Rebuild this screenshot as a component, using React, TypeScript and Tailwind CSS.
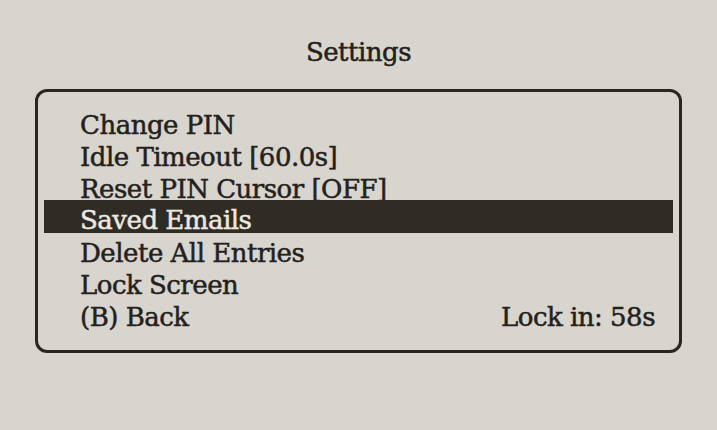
import React from 'react';

const items = [
  'Change PIN',
  'Idle Timeout [60.0s]',
  'Reset PIN Cursor [OFF]',
  'Saved Emails',
  'Delete All Entries',
  'Lock Screen',
];

const selected = 3;

// rows share one look; the selected one sits in a dark bar
const text = 'pl-[36px] leading-[32px] text-[26px] tracking-[-0.5px] whitespace-nowrap';

export default function App() {
  return (
    <div
      className="w-[717px] h-[430px] bg-[#d8d5ce] text-[#24211c] flex flex-col items-center [-webkit-text-stroke:0.5px_currentColor]"
      style={{ fontFamily: '"DejaVu Serif", serif' }}
    >
      <div className="mt-[36px] h-[32px] leading-[32px] text-[26px] tracking-[-0.5px]">Settings</div>

      <div className="mt-[21px] w-[647px] h-[264px] border-[3px] border-[#2a2722] rounded-[12px] px-[6px] pt-[17px] flex flex-col">
        {items.map((label, i) =>
          i === selected ? (
            <div
              key={label}
              className="-mt-[5px] mb-[4px] h-[33px] pt-[4px] bg-[#2f2c26] text-[#ece8e0]"
            >
              <div className={`h-[29px] ${text}`}>{label}</div>
            </div>
          ) : (
            <div key={label} className={`h-[32px] ${text}`}>
              {label}
            </div>
          )
        )}
        <div className={`flex justify-between pr-[18px] h-[32px] ${text}`}>
          <span>(B) Back</span>
          <span>Lock in: 58s</span>
        </div>
      </div>
    </div>
  );
}
